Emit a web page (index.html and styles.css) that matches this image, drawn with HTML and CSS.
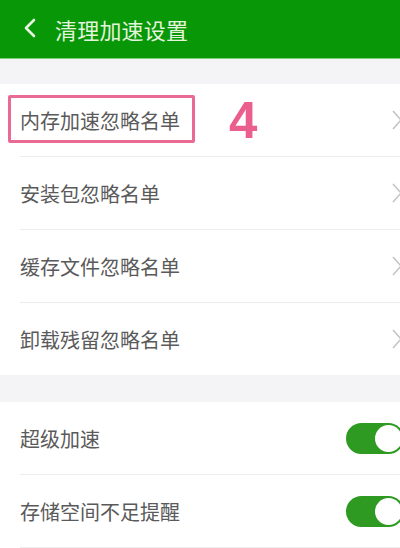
FILE: index.html
```html
<!DOCTYPE html>
<html lang="zh">
<head>
<meta charset="utf-8">
<link rel="stylesheet" href="styles.css">
</head>
<body>
<div class="app">
  <header class="topbar">
    <svg class="back" width="14" height="20" viewBox="0 0 14 20"><path d="M11 2 L3 10 L11 18" fill="none" stroke="#e6f4e0" stroke-width="2.6" stroke-linecap="round" stroke-linejoin="round"/></svg>
    <span class="title">清理加速设置</span>
  </header>
  <div class="gap"></div>
  <section class="group">
    <div class="row">
      <span class="label boxed">内存加速忽略名单</span>
      <span class="step">4</span>
      <svg class="chev" width="12" height="22" viewBox="0 0 12 22"><path d="M2 2 L10 11 L2 20" fill="none" stroke="#c4c4c4" stroke-width="1.6"/></svg>
    </div>
    <div class="row">
      <span class="label">安装包忽略名单</span>
      <svg class="chev" width="12" height="22" viewBox="0 0 12 22"><path d="M2 2 L10 11 L2 20" fill="none" stroke="#c4c4c4" stroke-width="1.6"/></svg>
    </div>
    <div class="row">
      <span class="label">缓存文件忽略名单</span>
      <svg class="chev" width="12" height="22" viewBox="0 0 12 22"><path d="M2 2 L10 11 L2 20" fill="none" stroke="#c4c4c4" stroke-width="1.6"/></svg>
    </div>
    <div class="row last">
      <span class="label">卸载残留忽略名单</span>
      <svg class="chev" width="12" height="22" viewBox="0 0 12 22"><path d="M2 2 L10 11 L2 20" fill="none" stroke="#c4c4c4" stroke-width="1.6"/></svg>
    </div>
  </section>
  <div class="gap gap2"></div>
  <section class="group">
    <div class="row">
      <span class="label">超级加速</span>
      <span class="toggle"><span class="knob"></span></span>
    </div>
    <div class="row">
      <span class="label">存储空间不足提醒</span>
      <span class="toggle"><span class="knob"></span></span>
    </div>
  </section>
</div>
</body>
</html>
```

FILE: styles.css
```css
html, body {
  margin: 0;
  padding: 0;
  background: #ffffff;
  overflow: hidden;
}
.app {
  width: 400px;
  height: 548px;
  overflow: hidden;
  font-family: "Noto Sans CJK SC", "Noto Sans", sans-serif;
}
.topbar {
  height: 58px;
  background: #079707;
  display: flex;
  align-items: center;
  padding-left: 23px;
  border-bottom: 1px solid #7fcf7a;
}
.back {
  margin-right: 18px;
  margin-top: -2px;
}
.title {
  color: #e4f3dc;
  font-size: 22px;
  letter-spacing: 0.2px;
}
.gap {
  height: 25px;
  background: #f4f3f6;
}
.gap2 {
  height: 27px;
}
.group {
  background: #ffffff;
}
.row {
  height: 72px;
  display: flex;
  align-items: center;
  margin-left: 20px;
  border-bottom: 1px solid #ececec;
  position: relative;
}
.row.last {
  border-bottom: none;
}
.label {
  font-size: 20px;
  color: #5a5a5a;
  flex: 1;
}
.boxed {
  flex: none;
  position: relative;
}
.boxed::before {
  content: "";
  position: absolute;
  left: -12px;
  top: -11px;
  width: 181px;
  height: 42px;
  border: 3px solid #e96a93;
  border-radius: 2px;
}
.step {
  flex: 1;
  margin-left: 49px;
  font-family: "Liberation Sans", Arial, sans-serif;
  font-weight: bold;
  font-size: 51px;
  color: #ea5f8d;
  line-height: 1;
  margin-top: 0;
}
.chev {
  margin-right: -3px;
  flex: none;
}
.toggle {
  flex: none;
  width: 58px;
  height: 31px;
  border-radius: 16px;
  background: #2f9a22;
  margin-right: -4px;
  position: relative;
}
.knob {
  position: absolute;
  right: 2px;
  top: 2px;
  width: 27px;
  height: 27px;
  border-radius: 50%;
  background: #ffffff;
}
```
